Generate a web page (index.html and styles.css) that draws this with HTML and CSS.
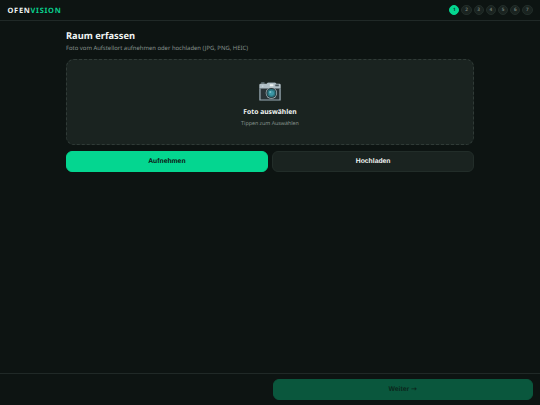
FILE: index.html
```html
<!DOCTYPE html>
<html lang="de">
<head>
<meta charset="utf-8">
<title>OfenVision</title>
<link rel="stylesheet" href="styles.css">
</head>
<body>
<header class="topbar">
  <div class="logo">OFEN<span class="accent">VISION</span></div>
  <nav class="steps">
    <span class="step active">1</span><span class="step">2</span><span class="step">3</span><span class="step">4</span><span class="step">5</span><span class="step">6</span><span class="step">7</span>
  </nav>
</header>
<main class="content">
  <h1 class="title">Raum erfassen</h1>
  <p class="subtitle">Foto vom Aufstellort aufnehmen oder hochladen (JPG, PNG, HEIC)</p>
  <section class="dropzone">
    <svg class="camera" viewBox="0 0 22 19" aria-hidden="true">
      <path d="M2.2 1.6V.6h3.3v1zM8 2l.8-1.2h7.5L17.4 2z" fill="#8da0a8"/>
      <rect x=".3" y="5.5" width="21.4" height="13" rx=".8" fill="#293337"/>
      <path d="M.3 6.5V3q0-1.3 1.3-1.3h6L8.8.8h7.4l1.2.9h3q1.3 0 1.3 1.3v3.5z" fill="#b0bec5"/>
      <path d="M.3 6.5h1.3v12H.3zM20.4 6.5h1.3v12h-1.3zM.5 17.4h21v1.2H.5z" fill="#94a5ad"/>
      <rect x="10.8" y="2.2" width="3.6" height="2" rx=".3" fill="#edf2f1"/>
      <rect x="16.3" y="2.4" width="3.5" height="1.9" rx=".3" fill="#46545a"/>
      <circle cx="3.8" cy="4.1" r=".6" fill="#e1eaed"/>
      <circle cx="12.4" cy="11.1" r="5.7" fill="#a5b6bc"/>
      <circle cx="12.4" cy="11.1" r="5" fill="#26353a"/>
      <circle cx="12.4" cy="11.1" r="4.1" fill="#29727d"/>
      <circle cx="12.4" cy="11.1" r="2.6" fill="#3c96a5"/>
      <circle cx="11.3" cy="9.9" r="1" fill="#7cc0ca"/>
    </svg>
    <div class="drop-title">Foto auswählen</div>
    <div class="drop-hint">Tippen zum Auswählen</div>
  </section>
  <div class="actions">
    <button class="btn primary">Aufnehmen</button>
    <button class="btn">Hochladen</button>
  </div>
</main>
<footer class="footer">
  <button class="btn primary next" disabled>Weiter <span class="arrow">→</span></button>
</footer>
</body>
</html>
```
FILE: styles.css
```css
* { box-sizing: border-box; margin: 0; padding: 0; }
body {
  display: flex;
  flex-direction: column;
  height: 405px;
  overflow: hidden;
  background: #0d1412;
  color: #f0f4f2;
  font-family: "Noto Sans", sans-serif;
  text-rendering: geometricPrecision;
}
.topbar {
  display: flex;
  align-items: center;
  justify-content: space-between;
  height: 21px;
  padding: 0 7.5px;
  border-bottom: 1px solid #202927;
}
.logo { padding-top: 1px; font-size: 7.4px; font-weight: 700; letter-spacing: .74px; line-height: 20px; }
.accent { color: #08d08d; }
.steps { display: flex; gap: 2px; }
.step {
  width: 10.2px;
  height: 10.2px;
  border: 1px solid #222d29;
  border-radius: 50%;
  background: #1a2320;
  color: #74807b;
  font-size: 4.7px;
  font-weight: 600;
  line-height: 9px;
  text-align: center;
}
.step.active { background: #04d690; border-color: #04d690; color: #0d1412; }
.content { flex: 1; width: 408px; margin: 0 auto; padding-top: 8px; }
.title { font-size: 9.3px; line-height: 14px; }
.subtitle { margin-top: 1px; color: #87938e; font-size: 5.9px; line-height: 8px; }
.dropzone {
  display: flex;
  flex-direction: column;
  align-items: center;
  height: 86px;
  margin-top: 7px;
  padding-top: 22px;
  border: 1px dashed #303b37;
  border-radius: 8px;
  background: #1a2320;
}
.camera { width: 22px; height: 19px; }
.drop-title { margin-top: 5px; font-size: 6.75px; font-weight: 700; line-height: 12px; }
.drop-hint { margin-top: 1px; color: #87938e; font-size: 5.3px; line-height: 8px; }
.actions { display: grid; grid-template-columns: 1fr 1fr; gap: 4.5px; margin-top: 5.5px; }
.btn {
  height: 21.3px;
  border: 1px solid #222d29;
  border-radius: 6px;
  background: #1a2320;
  color: #f0f4f2;
  font-family: "Liberation Sans", sans-serif;
  font-size: 6.8px;
  font-weight: 700;
  text-rendering: geometricPrecision;
}
.primary { background: #04d690; border-color: #04d690; color: #0d1412; }
.footer {
  display: flex;
  justify-content: flex-end;
  height: 32px;
  padding: 5px 7px;
  border-top: 1px solid #202927;
}
.next { width: 260.5px; height: 21px; background: #0a573d; border-color: #0a573d; color: #0b271c; }
.arrow { font-family: "DejaVu Sans", sans-serif; font-size: 7px; line-height: 7px; }
```
